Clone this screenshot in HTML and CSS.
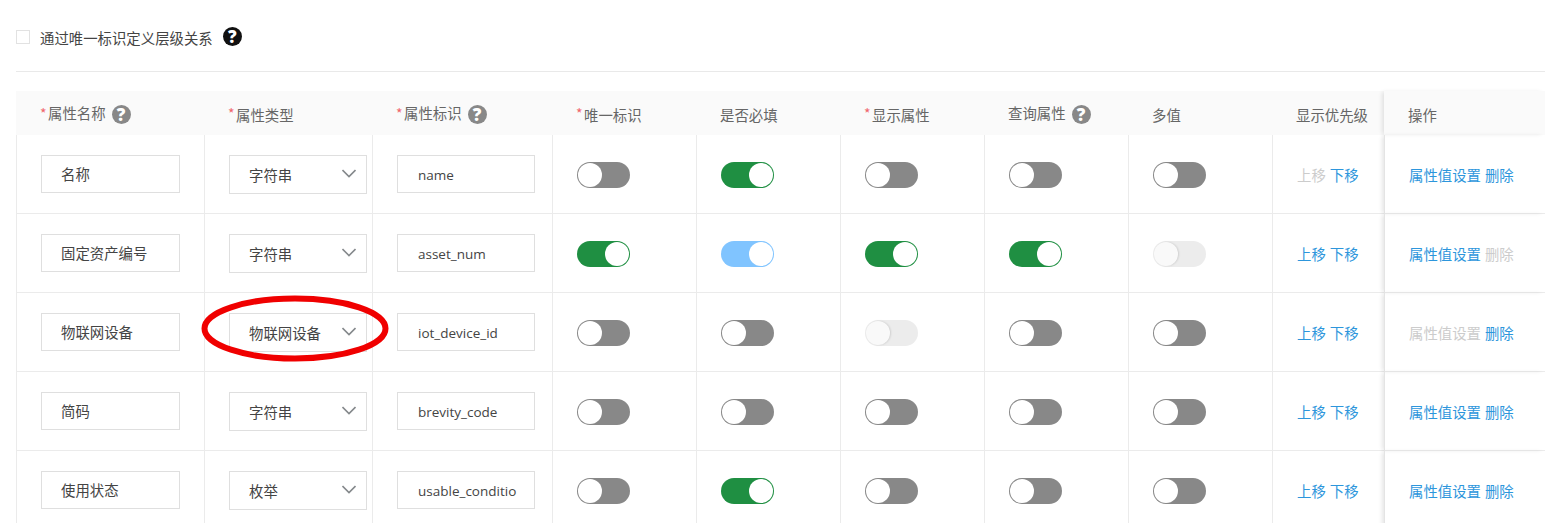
FILE: index.html
```html
<!DOCTYPE html>
<html lang="zh-CN">
<head>
<meta charset="utf-8">
<title>属性设置</title>
<link rel="stylesheet" href="styles.css">
</head>
<body>
<div class="page">
  <div class="unique-bar">
    <span class="checkbox"></span>
    <span class="unique-label">通过唯一标识定义层级关系</span>
    <span class="help help-dark">?</span>
  </div>
  <div class="divider"></div>
  <div class="table">
    <div class="row head">
      <div class="cell"><span class="req">*</span><span class="title">属性名称</span><span class="help">?</span></div>
      <div class="cell low"><span class="req">*</span><span>属性类型</span></div>
      <div class="cell"><span class="req">*</span><span class="title">属性标识</span><span class="help">?</span></div>
      <div class="cell low"><span class="req">*</span><span>唯一标识</span></div>
      <div class="cell low"><span>是否必填</span></div>
      <div class="cell low"><span class="req">*</span><span>显示属性</span></div>
      <div class="cell"><span class="title">查询属性</span><span class="help">?</span></div>
      <div class="cell low"><span>多值</span></div>
      <div class="cell low"><span>显示优先级</span></div>
      <div class="cell low fixed"><span>操作</span></div>
    </div>

    <div class="row">
      <div class="cell"><div class="field">名称</div></div>
      <div class="cell"><div class="field select"><span>字符串</span><svg class="chev" viewBox="0 0 14 9"><path d="M.5 1l6.500 6.500L13.500 1"/></svg></div></div>
      <div class="cell"><div class="field code">name</div></div>
      <div class="cell"><span class="toggle"></span></div>
      <div class="cell"><span class="toggle on"></span></div>
      <div class="cell"><span class="toggle"></span></div>
      <div class="cell"><span class="toggle"></span></div>
      <div class="cell"><span class="toggle"></span></div>
      <div class="cell links"><span class="off">上移</span><span>下移</span></div>
      <div class="cell links fixed"><span>属性值设置</span><span>删除</span></div>
    </div>

    <div class="row">
      <div class="cell"><div class="field">固定资产编号</div></div>
      <div class="cell"><div class="field select"><span>字符串</span><svg class="chev" viewBox="0 0 14 9"><path d="M.5 1l6.500 6.500L13.500 1"/></svg></div></div>
      <div class="cell"><div class="field code">asset_num</div></div>
      <div class="cell"><span class="toggle on"></span></div>
      <div class="cell"><span class="toggle on-light"></span></div>
      <div class="cell"><span class="toggle on"></span></div>
      <div class="cell"><span class="toggle on"></span></div>
      <div class="cell"><span class="toggle disabled"></span></div>
      <div class="cell links"><span>上移</span><span>下移</span></div>
      <div class="cell links fixed"><span>属性值设置</span><span class="off">删除</span></div>
    </div>

    <div class="row">
      <div class="cell"><div class="field">物联网设备</div></div>
      <div class="cell"><div class="field select"><span>物联网设备</span><svg class="chev" viewBox="0 0 14 9"><path d="M.5 1l6.500 6.500L13.500 1"/></svg></div></div>
      <div class="cell"><div class="field code">iot_device_id</div></div>
      <div class="cell"><span class="toggle"></span></div>
      <div class="cell"><span class="toggle"></span></div>
      <div class="cell"><span class="toggle disabled"></span></div>
      <div class="cell"><span class="toggle"></span></div>
      <div class="cell"><span class="toggle"></span></div>
      <div class="cell links"><span>上移</span><span>下移</span></div>
      <div class="cell links fixed"><span class="off">属性值设置</span><span>删除</span></div>
    </div>

    <div class="row">
      <div class="cell"><div class="field">简码</div></div>
      <div class="cell"><div class="field select"><span>字符串</span><svg class="chev" viewBox="0 0 14 9"><path d="M.5 1l6.500 6.500L13.500 1"/></svg></div></div>
      <div class="cell"><div class="field code">brevity_code</div></div>
      <div class="cell"><span class="toggle"></span></div>
      <div class="cell"><span class="toggle"></span></div>
      <div class="cell"><span class="toggle"></span></div>
      <div class="cell"><span class="toggle"></span></div>
      <div class="cell"><span class="toggle"></span></div>
      <div class="cell links"><span>上移</span><span>下移</span></div>
      <div class="cell links fixed"><span>属性值设置</span><span>删除</span></div>
    </div>

    <div class="row">
      <div class="cell"><div class="field">使用状态</div></div>
      <div class="cell"><div class="field select"><span>枚举</span><svg class="chev" viewBox="0 0 14 9"><path d="M.5 1l6.500 6.500L13.500 1"/></svg></div></div>
      <div class="cell"><div class="field code">usable_conditio</div></div>
      <div class="cell"><span class="toggle"></span></div>
      <div class="cell"><span class="toggle on"></span></div>
      <div class="cell"><span class="toggle"></span></div>
      <div class="cell"><span class="toggle"></span></div>
      <div class="cell"><span class="toggle"></span></div>
      <div class="cell links"><span>上移</span><span>下移</span></div>
      <div class="cell links fixed"><span>属性值设置</span><span>删除</span></div>
    </div>
  </div>
  <svg class="annotation" viewBox="0 0 190 68"><ellipse cx="95" cy="33.500" rx="90.500" ry="30"/></svg>
</div>
</body>
</html>
```

FILE: styles.css
```css
* { box-sizing: border-box; }
html, body { margin: 0; height: 523px; overflow: hidden; background: #fff; }
body {
  font-family: "Noto Sans CJK SC", "Open Sans", sans-serif;
  font-size: 14.4px;
  color: #555;
}
.page { position: relative; width: 1545px; height: 523px; padding: 0 0 0 16px; overflow: hidden; }
.unique-bar { height: 71px; padding-top: 26px; display: flex; align-items: flex-start; color: #444; }
.checkbox { width: 14px; height: 14px; margin-top: 4px; border: 1px solid #e2e2e2; background: #fff; flex: none; }
.unique-label { margin-left: 10px; line-height: 24px; }
.help {
  width: 19px; height: 19px; margin-left: 6px; border-radius: 50%;
  background: #888; color: #fff; font: 800 17px/19px "Open Sans", sans-serif;
  text-align: center; flex: none;
}
.help-dark { background: #111; margin-left: 10px; margin-top: 1px; }
.divider { height: 1px; background: #e9e9e9; margin-bottom: 19px; }
.table { width: 1529px; }
.row {
  display: grid;
  grid-template-columns: 188px 168px 180px 144px 144px 144px 144px 144px 112px 161px;
  height: 79px;
}
.row.head { height: 44px; background: #fafafa; }
.cell {
  display: flex; align-items: center; padding-left: 24px;
  border-left: 1px solid #ebebeb; border-bottom: 1px solid #ebebeb;
  min-width: 0; white-space: pre;
}
.head .cell { border: 0; color: #666; padding-left: 24px; }
.head .cell.low > span { position: relative; top: 1px; }
.head .title { position: relative; top: -1px; }
.req { color: #f0646c; font-size: 14px; width: 8px; flex: none; line-height: 12px; margin-top: 0; }
.head .cell.low > .req { top: 0; }
.head .help { margin-top: 2px; }
.field {
  width: 139px; height: 38px; border: 1px solid #dfdfdf; padding-left: 19px;
  line-height: 36px; color: #444; background: #fff; flex: none; overflow: hidden;
}
.code { width: 138px; padding-left: 20px; font-family: "Open Sans", sans-serif; font-size: 13.500px; line-height: 38px; }
.select { width: 138px; height: 39px; padding-left: 19px; padding-right: 10px; display: flex; align-items: center; justify-content: space-between; }
.select span { position: relative; top: 1px; }
.chev { width: 14px; height: 9px; fill: none; stroke: #85898c; stroke-width: 1.600; position: relative; top: -1px; }
.toggle {
  width: 53px; height: 26px; border-radius: 13px; background: #888; position: relative; top: 1px; flex: none; display: block;
}
.toggle::after {
  content: ""; position: absolute; left: 1px; top: 1px; width: 24px; height: 24px;
  border-radius: 50%; background: #fff;
}
.toggle.on { background: #1f8f42; }
.toggle.on::after { left: 28px; }
.toggle.on-light { background: #80c4ff; }
.toggle.on-light::after { left: 28px; }
.toggle.disabled { background: #ececec; }
.toggle.disabled::after { background: #f9f9f9; box-shadow: 1px 0 2px rgba(0,0,0,.12); }
.links { color: #2d96dc; gap: 4px; }
.links .off { color: #ccc; }
.fixed { border-left: 1px solid #e4e4e4; box-shadow: -3px 0 4px -1px rgba(0,0,0,.1); position: relative; }
.annotation {
  position: absolute; left: 200px; top: 295px; width: 190px; height: 68px; overflow: visible;
  fill: none; stroke: #f00000; stroke-width: 6;
}
```
